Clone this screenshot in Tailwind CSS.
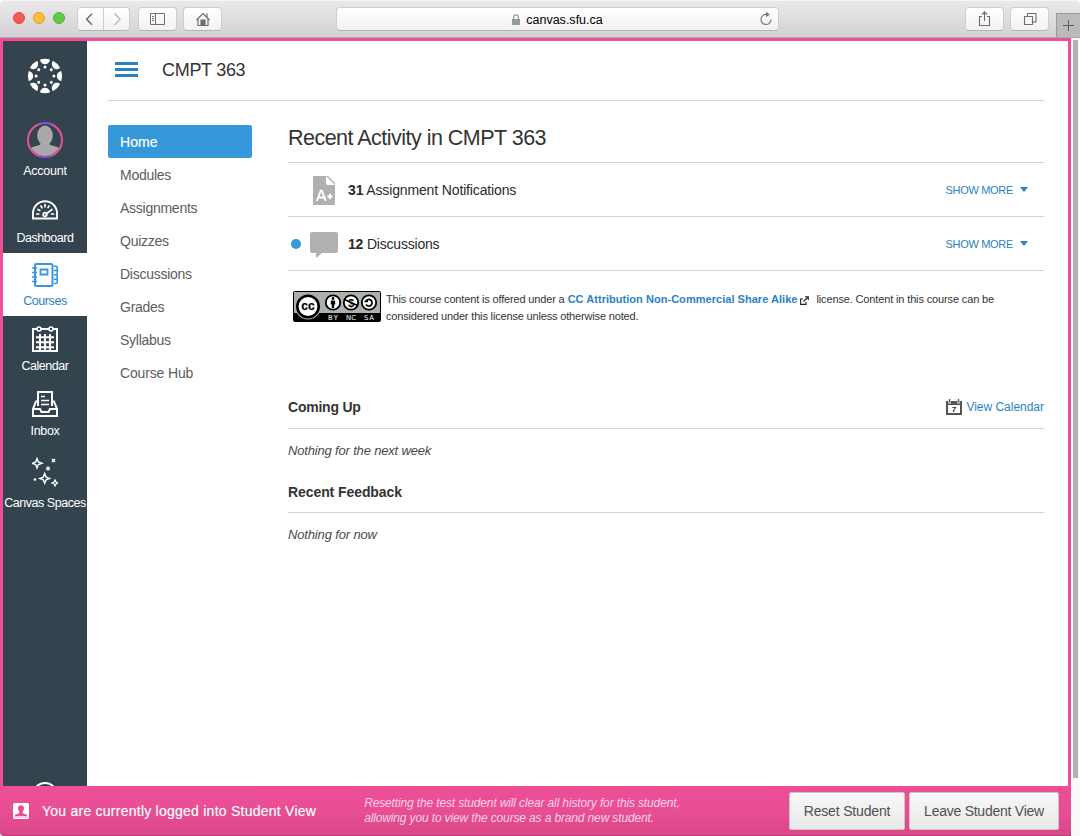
<!DOCTYPE html>
<html lang="en">
<head>
<meta charset="utf-8">
<title>CMPT 363</title>
<script src="https://cdn.jsdelivr.net/npm/@tailwindcss/browser@4"></script>
</head>
<body class="w-[1080px] h-[836px] overflow-hidden flex flex-col bg-white font-['Liberation_Sans',Arial,sans-serif] text-[#2d3b45] whitespace-nowrap">

<!-- Browser toolbar -->
<header class="relative h-[38px] shrink-0 flex items-start pt-[7px] bg-linear-to-b from-[#ebe9eb] to-[#d3d1d3] border-b border-[#a9a7a9] shadow-[inset_0_1px_0_#f7f5f7] rounded-t-[5px]">
  <div class="flex gap-2 ml-[13px] mt-[5px]">
    <i class="size-3 rounded-full bg-[#f25a55] border border-[#dc4a45]"></i>
    <i class="size-3 rounded-full bg-[#fabd35] border border-[#dfa032]"></i>
    <i class="size-3 rounded-full bg-[#60cc43] border border-[#4eb136]"></i>
  </div>
  <div class="flex ml-3 h-6 w-[53px] rounded-[4px] bg-linear-to-b from-white to-[#f2f2f2] border border-[#cfcdcf] border-b-[#b5b3b5] text-[#6e6e6e]">
    <svg class="w-[26px] h-[22px] border-r border-[#cfcdcf]" viewBox="0 0 26 22" fill="none" stroke="currentColor" stroke-width="1.6"><path d="M14.500 5.500 9 11.300 14.500 17"/></svg>
    <svg class="w-[25px] h-[22px] text-[#bdbdbd]" viewBox="0 0 25 22" fill="none" stroke="currentColor" stroke-width="1.6"><path d="M10.500 5.500 16 11.300 10.500 17"/></svg>
  </div>
  <div class="ml-2 h-6 w-[39px] rounded-[4px] bg-linear-to-b from-white to-[#f2f2f2] border border-[#cfcdcf] border-b-[#b5b3b5] text-[#6e6e6e]">
    <svg class="w-9 h-[22px]" viewBox="0 0 36 22" fill="none" stroke="currentColor"><path d="M11.500 5.500h14v11h-14zM16.500 5.500v11M13 8.500h2M13 10.500h2M13 12.500h2"/></svg>
  </div>
  <div class="ml-[6px] h-6 w-[39px] rounded-[4px] bg-linear-to-b from-white to-[#f2f2f2] border border-[#cfcdcf] border-b-[#b5b3b5] text-[#6e6e6e]">
    <svg class="w-[37px] h-[22px]" viewBox="0 0 37 22" fill="none" stroke="currentColor" stroke-width="1.200"><path d="M12.500 12 19 5.500 25.500 12M14 11v6.500h10V11M23 9V5.500"/><path d="M17 12h4v5.500h-4z" fill="currentColor"/></svg>
  </div>
  <div class="relative ml-[114px] h-6 w-[443px] rounded-[4px] bg-linear-to-b from-white to-[#f1f1f1] border border-[#cfcdcf] border-b-[#b5b3b5] flex items-center justify-center pt-[2px]">
    <svg class="w-2 h-[11px] mr-[6px] mb-[2px] text-[#999]" viewBox="0 0 8 11"><path d="M0 5h8v6H0z" fill="currentColor"/><path d="M1.600 5.500V3.200a2.400 2.400 0 0 1 4.800 0v2.300" fill="none" stroke="currentColor" stroke-width="1.200"/></svg>
    <span class="text-[12.5px] text-black tracking-[0.01px]">canvas.sfu.ca</span>
    <svg class="absolute right-[5px] top-[3px] w-3.5 h-4 text-[#777]" viewBox="0 0 14 16" fill="none" stroke="currentColor" stroke-width="1.200"><path d="M7.500 3.500A5 5 0 1 0 12 8.500"/><path d="M7 .8v5.400L10.800 3.500z" fill="currentColor" stroke="none"/></svg>
  </div>
  <div class="ml-[186px] h-6 w-[39px] rounded-[4px] bg-linear-to-b from-white to-[#f2f2f2] border border-[#cfcdcf] border-b-[#b5b3b5] text-[#6e6e6e]">
    <svg class="w-[37px] h-[22px]" viewBox="0 0 37 22" fill="none" stroke="currentColor" stroke-width="1.100"><path d="M16 8.500h-2.500v9h10v-9H21M18.500 13V4M15.800 6.700l2.700-2.900 2.700 2.900"/></svg>
  </div>
  <div class="ml-[6px] h-6 w-[39px] rounded-[4px] bg-linear-to-b from-white to-[#f2f2f2] border border-[#cfcdcf] border-b-[#b5b3b5] text-[#6e6e6e]">
    <svg class="w-[37px] h-[22px]" viewBox="0 0 37 22" fill="none" stroke="currentColor" stroke-width="1.100"><path d="M13.500 8.500h8v8h-8zM16.500 8.500v-3h8.500v8.500h-3.500"/></svg>
  </div>
  <div class="ml-[7px] mt-[6px] h-6 w-6 bg-[#bcbabc] border-l border-t border-[#9b999b]">
    <svg class="size-[23px]" viewBox="0 0 23 23" stroke="#5f5f5f"><path d="M6 11.500h11M11.500 6v11"/></svg>
  </div>
</header>

<div class="flex h-[798px]">
  <div class="w-[1071px] flex flex-col">
    <div class="flex h-[748px] border-t-3 border-x-3 border-[#ee4f96]">

      <!-- Global navigation -->
      <nav class="w-[84px] shrink-0 bg-[#34444f] text-white text-[12.5px] leading-[15px] flex flex-col items-center overflow-hidden">
        <svg class="mt-[17px] size-9 shrink-0" viewBox="-18 -18 36 36" fill="#fff">
          <defs><g id="seg"><path d="M-5.100-16.300Q0-18 5.100-16.300C4.600-13.600 2.600-11.800 0-11.800S-4.600-13.600-5.100-16.300Z"/><circle cy="-8.900" r="1.500"/></g></defs>
          <use href="#seg"/><use href="#seg" transform="rotate(45)"/><use href="#seg" transform="rotate(90)"/><use href="#seg" transform="rotate(135)"/><use href="#seg" transform="rotate(180)"/><use href="#seg" transform="rotate(225)"/><use href="#seg" transform="rotate(270)"/><use href="#seg" transform="rotate(315)"/>
        </svg>
        <svg class="mt-7 size-9 shrink-0" viewBox="0 0 36 36">
          <defs><linearGradient id="ring" gradientUnits="userSpaceOnUse" x1="0" y1="0" x2="0" y2="36"><stop offset="0" stop-color="#7550f0"/><stop offset=".03" stop-color="#7550f0"/><stop offset=".09" stop-color="#ee4f96"/><stop offset=".91" stop-color="#ee4f96"/><stop offset=".97" stop-color="#7550f0"/></linearGradient><clipPath id="face"><circle cx="18" cy="18" r="16"/></clipPath></defs>
          <g clip-path="url(#face)" fill="#a9a9a9"><ellipse cx="18" cy="13.500" rx="7.800" ry="10"/><path d="M13.500 19h9v3.200q1 1.200 4.500 1.900 5.500 1.200 7 3.900v8H2v-8q1.500-2.700 7-3.900 3.500-.7 4.500-1.900z"/></g>
          <circle cx="18" cy="18" r="17" fill="none" stroke="url(#ring)" stroke-width="2"/>
        </svg>
        <span class="mt-[6px] tracking-[-0.25px]">Account</span>
        <svg class="mt-[21px] w-[26px] h-5 shrink-0" viewBox="0 0 26 20" fill="none" stroke="#fff" stroke-width="1.900" stroke-linecap="round"><path d="M1 18.500v-5.300a12 12 0 0 1 24 0v5.300z"/><path d="M4.700 14h2M6 9.500l1.800 1M9 6l1 1.800M13 4.500v2.200M17 6l-1 1.600M19.500 14h2" stroke-width="1.700"/><path d="m14 14 6-4.500" stroke-width="1.700"/><circle cx="13" cy="14.500" r="1.800" stroke-width="1.700"/></svg>
        <span class="mt-[11px] tracking-[-0.45px]">Dashboard</span>
        <div class="mt-[7px] h-[63px] w-full shrink-0 bg-white text-[#2c82c0] flex flex-col items-center">
          <svg class="mt-[9px] w-[26px] h-[26px] shrink-0" viewBox="0 0 26 26" fill="none" stroke="#3498db" stroke-width="2"><rect x="3" y="2" width="17.500" height="22" rx="1.500"/><path d="M8.500 7.500h7v5h-7z" stroke-width="1.800"/><path d="M0 6h5M0 10.500h5M0 15h5M0 19.500h5" stroke-width="1.700"/><path d="M22 4.300h2q1.200 0 1.200 1v3.200h-3.200M25.200 8.500v4.300H22M25.200 12.800v4.400H22M25.200 17.200v3.300q0 1-1.200 1h-2" stroke-width="1.600"/></svg>
          <span class="mt-[6px] tracking-[-0.42px]">Courses</span>
        </div>
        <svg class="mt-[10px] size-[26px] shrink-0" viewBox="0 0 26 26" fill="none" stroke="#fff" stroke-width="2"><path d="M5 3H1v22h24V3h-4M9 3h8"/><circle cx="7" cy="3" r="2" stroke-width="1.600"/><circle cx="19" cy="3" r="2" stroke-width="1.600"/><path d="M4 11.300h18M4 16.300h18M4 21.300h18M8 8v16M13 8v16M18 8v16" stroke-width="1.900"/></svg>
        <span class="mt-[7px] tracking-[-0.45px]">Calendar</span>
        <svg class="mt-[17px] size-[26px] shrink-0" viewBox="0 0 26 26" fill="none" stroke="#fff" stroke-width="2"><path d="M6 15V1h14v14M6 10.500H4L1 18v7h24v-7l-3-7.500h-2M1 18h7l1.500 3h7l1.500-3h7"/><path d="M9 5.500h4M9 9.500h8M9 13.500h8" stroke-width="1.700"/></svg>
        <span class="mt-[7px] tracking-[-0.3px]">Inbox</span>
        <svg class="mt-[18px] w-[26px] h-[30px] shrink-0" viewBox="0 0 26 30" fill="none" stroke="#fff" stroke-width="1.400"><path d="M5 1.500 6.300 5 10 6.300 6.300 7.600 5 11 3.700 7.600.3 6.300 3.700 5zM12.700 16.500l1.400 3.600 3.500 1.300-3.500 1.400-1.400 3.500-1.400-3.500-3.500-1.400 3.500-1.300z"/><path d="m23 23 .9 2.100 2.100.9-2.100.9-.9 2.100-.9-2.100-2.100-.9 2.100-.9z" stroke-width="1.200"/><circle cx="16" cy="11.500" r="2" fill="#fff" stroke="none"/><circle cx="3" cy="22.500" r="1.300" fill="#fff" stroke="none"/><path d="m20 2 3 3m0-3-3 3"/></svg>
        <span class="mt-[9px] tracking-[-0.46px]">Canvas Spaces</span>
        <svg class="mt-[271px] size-[26px] shrink-0" viewBox="0 0 26 26" fill="none" stroke="#fff" stroke-width="2"><circle cx="13" cy="13" r="12"/></svg>
      </nav>

      <main class="flex-1 pl-[21px] pr-6 bg-white">
        <div class="h-[60px] border-b border-[#d0d0d0] flex items-start">
          <svg class="ml-[7px] mt-[21px] w-[23px] h-[15px]" viewBox="0 0 23 15" fill="#2c82c0"><path d="M0 0h23v3H0zM0 6h23v3H0zM0 12h23v3H0z"/></svg>
          <span class="ml-6 mt-[17px] text-[18px] leading-6 tracking-[-0.3px] text-[#333]">CMPT 363</span>
        </div>

        <div class="flex">
          <!-- Course navigation -->
          <ul class="w-36 mt-6 text-[14px] leading-[33px] tracking-[-0.26px] text-[#5c5c5c]">
            <li class="h-[33px] px-3 pt-px rounded-[2px] bg-[#3498db] text-white tracking-[0.1px] [-webkit-text-stroke:0.2px_white]">Home</li>
            <li class="h-[33px] px-3 pt-px">Modules</li>
            <li class="h-[33px] px-3 pt-px">Assignments</li>
            <li class="h-[33px] px-3 pt-px">Quizzes</li>
            <li class="h-[33px] px-3 pt-px">Discussions</li>
            <li class="h-[33px] px-3 pt-px">Grades</li>
            <li class="h-[33px] px-3 pt-px">Syllabus</li>
            <li class="h-[33px] px-3 pt-px tracking-[-0.15px]">Course Hub</li>
          </ul>

          <section class="ml-9 w-[756px] text-[#333]">
            <h1 class="h-[62px] pt-[23px] text-[21.5px] leading-7 tracking-[-0.52px] border-b border-[#d3d3d3]">Recent Activity in CMPT 363</h1>
            <div class="h-[54px] border-b border-[#d3d3d3] flex items-center">
              <svg class="ml-[25px] mt-px w-[22px] h-[29px]" viewBox="0 0 22 29"><path d="M1 0h12v7q0 2 2 2h7v19q0 1-1 1H1q-1 0-1-1V1q0-1 1-1z" fill="#b0b0b0"/><path d="M13 0h2l7 7v2l-8-8z" fill="#b0b0b0"/><path d="m3.800 25 3.900-10.300h1.200L12.800 25M5.400 21.500h5.800M14.300 20.500h5.400M17 17.800v5.400" fill="none" stroke="#fff" stroke-width="1.900"/></svg>
              <span class="ml-[13px] mt-[2px] text-[14px] tracking-[-0.14px] text-[#2a2a2a]"><b>31</b> Assignment Notifications</span>
              <span class="ml-auto mt-[2px] text-[11px] text-[#2c82c0] tracking-[-0.32px]">SHOW MORE</span>
              <i class="ml-[7px] mr-4 border-x-[4.5px] border-x-transparent border-t-5 border-t-[#2c82c0]"></i>
            </div>
            <div class="h-[54px] border-b border-[#d3d3d3] flex items-center">
              <i class="ml-[3px] size-[10px] rounded-full bg-[#3498db]"></i>
              <svg class="ml-[9px] mt-[2px] w-7 h-7" viewBox="0 0 28 28"><path d="M2 1h24q2 0 2 2v17q0 2-2 2H12l-6 5v-5H2q-2 0-2-2V3q0-2 2-2z" fill="#b0b0b0"/></svg>
              <span class="ml-[10px] mt-[2px] text-[14px] tracking-[-0.2px] text-[#2a2a2a]"><b>12</b> Discussions</span>
              <span class="ml-auto mt-[2px] text-[11px] text-[#2c82c0] tracking-[-0.32px]">SHOW MORE</span>
              <i class="ml-[7px] mr-4 border-x-[4.5px] border-x-transparent border-t-5 border-t-[#2c82c0]"></i>
            </div>

            <div class="h-[52px] mt-5 pl-[5px] flex items-start">
              <svg class="w-[88px] h-[31px]" viewBox="0 0 88 31">
                <rect x=".5" y=".5" width="87" height="30" rx="1" fill="#aab2ab" stroke="#000"/><path d="M1 22h86v8H1z"/>
                <circle cx="15" cy="15.500" r="13" fill="#aab2ab"/><circle cx="15" cy="15.500" r="10.700" fill="#fff" stroke="#000" stroke-width="2.600"/>
                <text x="15" y="19" text-anchor="middle" font-family="Liberation Sans" font-weight="700" font-size="12" stroke="#000" stroke-width=".2">cc</text>
                <g fill="#fff" stroke="#000" stroke-width="1.800"><circle cx="40" cy="11.500" r="7.200"/><circle cx="58" cy="11.500" r="7.200"/><circle cx="76" cy="11.500" r="7.200"/></g>
                <circle cx="40" cy="7.500" r="1.400"/><path d="M37.800 9.500h4.400v4h-1v3.500h-2.400v-3.500h-1z"/>
                <text x="58" y="15.500" text-anchor="middle" font-family="Liberation Sans" font-weight="700" font-size="11">$</text><path d="m51.500 8.500 13 6" stroke="#000" stroke-width="1.400"/>
                <path d="M73 10a3.300 3.300 0 1 1 0 3.500M71.500 10.300h3.500" fill="none" stroke="#000" stroke-width="1.700"/>
                <g fill="#fff" font-family="DejaVu Sans" font-size="6.800"><text x="35" y="28.700" textLength="10">BY</text><text x="53" y="28.700" textLength="10">NC</text><text x="71" y="28.700" textLength="10">SA</text></g>
              </svg>
              <p class="ml-[5px] text-[11px] leading-[17px] text-[#333]"><span class="tracking-[-0.155px]">This course content is offered under a</span> <b class="text-[#2c82c0] tracking-[0.035px]">CC Attribution Non-Commercial Share Alike</b><svg class="inline ml-[3px] mr-[7px] w-[9px] h-[9px] align-[-2px]" viewBox="0 0 9 9" fill="none" stroke="#222" stroke-width="1.100"><path d="M3 3H.6v5.400H6V6M3.500 5.500 8 1M5 .7h3.300V4"/></svg><span class="tracking-[-0.14px]">license. Content in this course can be</span><br><span class="tracking-[-0.165px]">considered under this license unless otherwise noted.</span></p>
            </div>

            <div class="mt-[43px] h-[43px] pt-[11px] border-b border-[#d3d3d3] flex items-start">
              <h2 class="text-[14px] leading-5 tracking-[-0.23px] font-bold">Coming Up</h2>
              <svg class="ml-auto mt-[2px] w-4 h-4" viewBox="0 0 16 16"><path d="M0 2h2.300v2.500h2.400V2h6.600v2.500h2.400V2H16v14H0zM2 6v8h12V6z" fill="#555" fill-rule="evenodd"/><path d="M3.500 0v3.500M12.500 0v3.500" stroke="#555" stroke-width="1.400"/><text x="8" y="13" font-size="8" font-weight="700" text-anchor="middle" fill="#222" font-family="Liberation Sans">7</text></svg>
              <a class="ml-1 text-[12px] leading-5 text-[#2c82c0] tracking-[-0.02px]">View Calendar</a>
            </div>
            <p class="mt-3 h-5 text-[13px] leading-5 tracking-[-0.17px] italic text-[#4a4a4a]">Nothing for the next week</p>
            <h2 class="mt-[10px] h-[42px] pt-[11px] text-[14px] leading-5 tracking-[-0.08px] font-bold border-b border-[#d3d3d3]">Recent Feedback</h2>
            <p class="mt-3 text-[13px] leading-5 tracking-[-0.15px] italic text-[#4a4a4a]">Nothing for now</p>
          </section>
        </div>
      </main>
    </div>

    <!-- Student view bar -->
    <footer class="h-[50px] bg-linear-to-b from-[#ee4f96] via-[#e94e94] to-[#d94888] border-b border-[#b84078] rounded-bl-[4px] text-white flex items-center">
      <svg class="ml-[13px] size-4" viewBox="0 0 16 16"><rect width="16" height="16" rx="1.500" fill="#fff"/><path d="M8 2.200c2 0 3 1.300 3 3.100 0 1.700-.7 2.500-1.300 3.200v1.700l4.300 1.500v1.300H2v-1.300l4.300-1.500V8.500C5.700 7.800 5 7 5 5.300c0-1.800 1-3.100 3-3.100z" fill="#e94e94"/><path d="M1 14h14" stroke="#f29cc3"/></svg>
      <span class="ml-[13px] mt-[2px] text-[14px] tracking-[0.245px] [-webkit-text-stroke:0.15px_white]">You are currently logged into Student View</span>
      <p class="ml-12 text-[12px] leading-[15px] italic tracking-[-0.14px] text-[#fbd3e5]">Resetting the test student will clear all history for this student,<br>allowing you to view the course as a brand new student.</p>
      <button class="ml-auto h-[38px] w-[116px] pt-px rounded-[2px] bg-linear-to-b from-[#f8f8f8] to-[#e8e8e8] border border-[#d0c4ca] text-[#505050] text-[14px] tracking-[-0.17px]">Reset Student</button>
      <button class="ml-1 mr-3 h-[38px] w-[150px] pt-px rounded-[2px] bg-linear-to-b from-[#f8f8f8] to-[#e8e8e8] border border-[#d0c4ca] text-[#505050] text-[14px] tracking-[-0.25px]">Leave Student View</button>
    </footer>
  </div>

  <!-- Scrollbar -->
  <div class="flex-1 bg-[#fafafa] pl-[2px] pt-[2px]"><div class="w-[5px] h-[738px] bg-[#b2b2b2]"></div></div>
</div>
</body>
</html>
